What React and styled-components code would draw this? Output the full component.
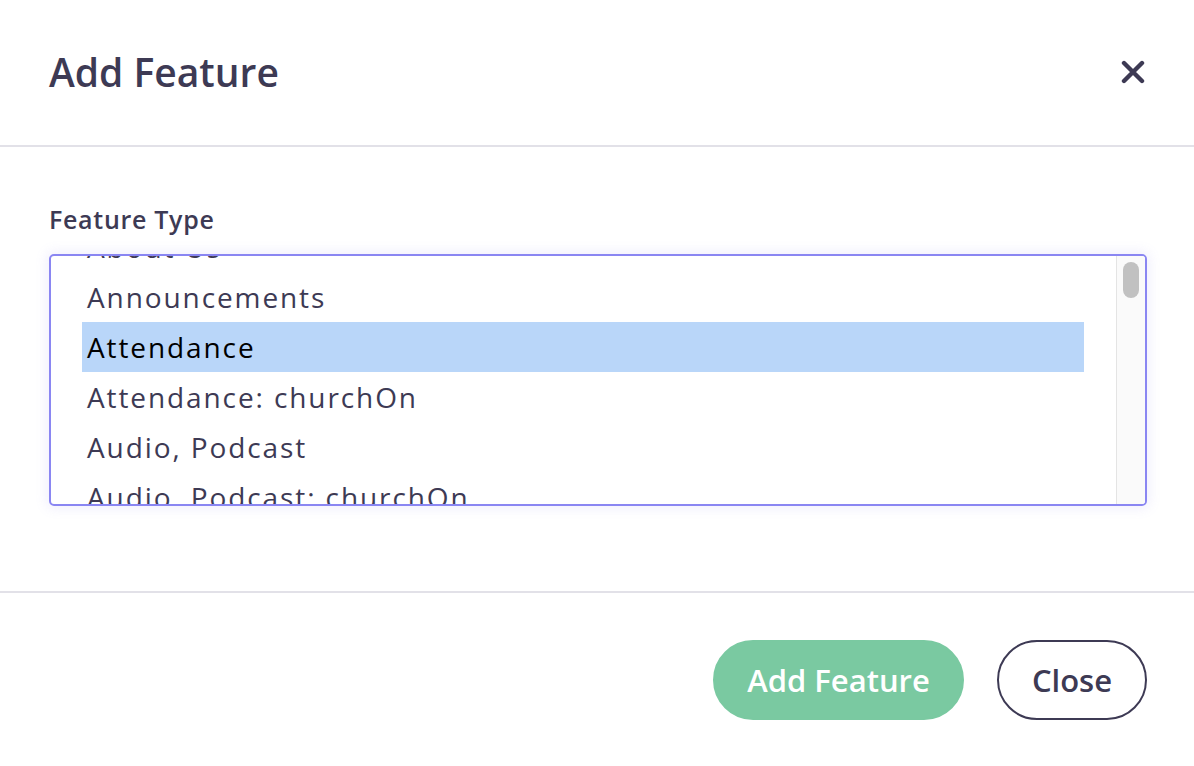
import { useEffect, useRef } from "react"
import styled, { createGlobalStyle } from "styled-components"

const GlobalStyle = createGlobalStyle`
  html, body {
    margin: 0;
    padding: 0;
    background: #fff;
    font-family: "Open Sans", Lato, sans-serif;
    color: #3d3a54;
  }
`

const Modal = styled.div`
  width: 1194px;
  height: 766px;
  display: flex;
  flex-direction: column;
  background: #fff;
`

const Header = styled.div`
  height: 147px;
  box-sizing: border-box;
  display: flex;
  align-items: center;
  justify-content: space-between;
  padding: 0 48px 2px 49px;
  border-bottom: 2px solid #e2e1e8;
`

const Title = styled.h1`
  margin: 0;
  font-size: 39px;
  font-weight: 600;
  color: #3d3a54;
`

const CloseX = styled.button`
  border: 0;
  background: none;
  padding: 0;
  width: 26px;
  height: 26px;
  display: flex;
  align-items: center;
  justify-content: center;
  cursor: pointer;
`

const Body = styled.div`
  height: 446px;
  box-sizing: border-box;
  padding: 56px 47px 0 49px;
  border-bottom: 2px solid #e2e1e8;
`

const Label = styled.label`
  display: block;
  font-size: 25px;
  font-weight: 600;
  letter-spacing: 0.7px;
  line-height: 32px;
  margin-bottom: 19px;
`

const ListBox = styled.div`
  height: 252px;
  box-sizing: border-box;
  display: flex;
  border: 2px solid #8a86f2;
  border-radius: 5px;
  box-shadow: 0 0 12px 3px rgba(138, 134, 242, 0.12);
  overflow: hidden;
`

const Options = styled.div`
  flex: 1;
  overflow: hidden;
  padding: 0 32px 0 31px;
`

const Option = styled.div`
  height: 50px;
  line-height: 50px;
  padding-left: 5px;
  font-size: 28px;
  font-weight: 500;
  letter-spacing: 1.9px;
  white-space: nowrap;
  color: ${p => (p.$selected ? "#000" : "#3d3a54")};
  background: ${p => (p.$selected ? "#b9d6f9" : "transparent")};
`

const ScrollTrack = styled.div`
  width: 29px;
  flex-shrink: 0;
  background: #fafafa;
  border-left: 1px solid #e4e4e4;
  display: flex;
  justify-content: center;
  padding-top: 6px;
  box-sizing: border-box;
`

const ScrollThumb = styled.div`
  width: 16px;
  height: 36px;
  border-radius: 8px;
  background: #c1c1c1;
`

const Footer = styled.div`
  flex: 1;
  display: flex;
  align-items: center;
  justify-content: flex-end;
  gap: 33px;
  padding: 0 47px 0 0;
`

const Button = styled.button`
  height: 80px;
  border-radius: 40px;
  font-family: "Open Sans", Lato, sans-serif;
  font-size: 31px;
  font-weight: 600;
  cursor: pointer;
  box-sizing: border-box;
  padding: 0;
  border: 2px solid ${p => (p.$primary ? "#7ac9a1" : "#3d3a54")};
  background: ${p => (p.$primary ? "#7ac9a1" : "#fff")};
  color: ${p => (p.$primary ? "#fff" : "#3d3a54")};
  width: ${p => (p.$primary ? "251px" : "150px")};
`

const features = [
  "About Us",
  "Announcements",
  "Attendance",
  "Attendance: churchOn",
  "Audio, Podcast",
  "Audio, Podcast: churchOn",
  "Bible",
  "Blog",
  "Calendar",
  "Check-In",
  "Connect Card",
  "Contact Us",
  "Directory",
  "Events",
  "Facebook",
  "Forms",
  "Giving",
  "Groups",
  "Instagram",
  "Live Stream",
  "Locations",
  "Media",
  "Messages",
  "Ministries",
  "Notes",
  "Prayer",
  "Reading Plan",
  "Sermons",
  "Serve",
  "Staff",
  "Twitter",
  "Video",
  "Website",
  "YouTube",
]

export default function App() {
  const listRef = useRef(null)

  useEffect(() => {
    if (listRef.current) listRef.current.scrollTop = 34
  }, [])

  return (
    <>
      <GlobalStyle />
      <Modal>
        <Header>
          <Title>Add Feature</Title>
          <CloseX aria-label="Close">
            <svg width="24" height="24" viewBox="0 0 24 24">
              <path d="M3 3 L21 21 M21 3 L3 21" stroke="#3d3a54" strokeWidth="4.4" strokeLinecap="round" />
            </svg>
          </CloseX>
        </Header>
        <Body>
          <Label>Feature Type</Label>
          <ListBox>
            <Options ref={listRef}>
              {features.map(f => (
                <Option key={f} $selected={f === "Attendance"}>{f}</Option>
              ))}
            </Options>
            <ScrollTrack>
              <ScrollThumb />
            </ScrollTrack>
          </ListBox>
        </Body>
        <Footer>
          <Button $primary>Add Feature</Button>
          <Button>Close</Button>
        </Footer>
      </Modal>
    </>
  )
}
